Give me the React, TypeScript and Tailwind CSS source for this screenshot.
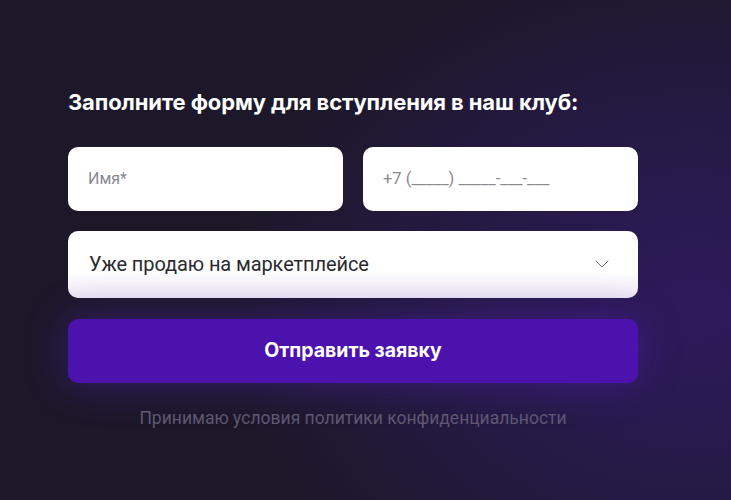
import { ChevronDown } from "lucide-react";

const App = () => {
  return (
    <div className="w-[731px] h-[500px] overflow-hidden bg-[radial-gradient(ellipse_75%_85%_at_95%_62%,#2e1a5c_0%,#261a47_40%,#1c1829_85%)]">
      <div className="w-[570px] ml-[68px] pt-[88px]">
        {/* title */}
        <h2 className="font-['Inter',sans-serif] font-bold text-[22px] leading-[28px] text-white tracking-[-0.1px]">
          Заполните форму для вступления в наш клуб:
        </h2>
        {/* inputs */}
        <div className="mt-[31px] grid grid-cols-2 gap-5">
          <div className="h-16 rounded-[10px] bg-white flex items-center px-5">
            <span className="font-['Roboto',sans-serif] text-[16px] text-[#8a8a8f]">
              Имя*
            </span>
          </div>
          <div className="h-16 rounded-[10px] bg-white flex items-center px-5">
            <span className="font-['Roboto',sans-serif] text-[16.5px] text-[#8a8a8f]">
              +7 (_____) _____-___-___
            </span>
          </div>
        </div>
        {/* select */}
        <div className="mt-5 h-[67px] rounded-[10px] bg-[linear-gradient(to_bottom,#ffffff_0%,#ffffff_60%,#ece8f4_100%)] flex items-center justify-between pl-[21px] pr-[24px] pb-[2px]">
          <span className="font-['Roboto',sans-serif] text-[20px] text-[#2a2a2e] tracking-[-0.1px]">
            Уже продаю на маркетплейсе
          </span>
          <ChevronDown className="w-6 h-6 text-[#6f6f75]" strokeWidth={1} />
        </div>
        {/* button */}
        <button className="mt-[21px] w-full h-16 rounded-[10px] bg-[#4c12ae] shadow-[0_0_40px_rgba(90,30,200,0.45)] font-['Inter',sans-serif] font-bold text-[19.5px] text-white">
          Отправить заявку
        </button>
        {/* policy */}
        <p className="mt-[22px] text-center font-['Roboto',sans-serif] text-[17.5px] text-[#5e5870]">
          Принимаю условия политики конфиденциальности
        </p>
      </div>
    </div>
  );
};

export default App;
